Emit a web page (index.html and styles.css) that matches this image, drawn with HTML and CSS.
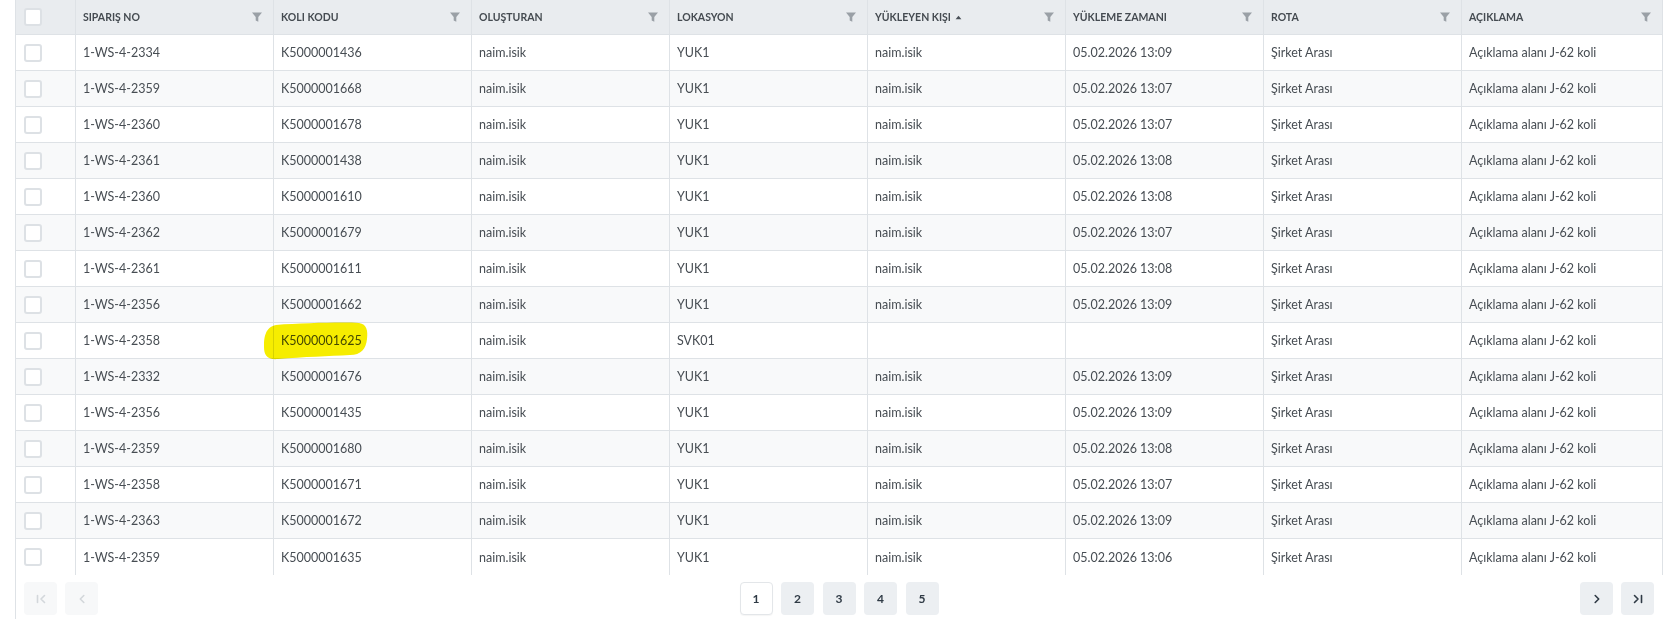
FILE: index.html
```html
<!DOCTYPE html>
<html lang="tr">
<head>
<meta charset="utf-8">
<title>Koli Listesi</title>
<link rel="stylesheet" href="styles.css">
</head>
<body>
<div class="panel">
  <div class="grid" id="grid">
    <div class="row head">
      <div class="cell chk"><span class="box"></span></div>
      <div class="cell"><span class="label">SIPARIŞ NO</span><svg class="filter" viewBox="0 0 12 12"><path d="M1 1.5H11L7.3 6V10.8L4.7 9.6V6Z"/></svg></div>
      <div class="cell"><span class="label">KOLI KODU</span><svg class="filter" viewBox="0 0 12 12"><path d="M1 1.5H11L7.3 6V10.8L4.7 9.6V6Z"/></svg></div>
      <div class="cell"><span class="label">OLUŞTURAN</span><svg class="filter" viewBox="0 0 12 12"><path d="M1 1.5H11L7.3 6V10.8L4.7 9.6V6Z"/></svg></div>
      <div class="cell"><span class="label">LOKASYON</span><svg class="filter" viewBox="0 0 12 12"><path d="M1 1.5H11L7.3 6V10.8L4.7 9.6V6Z"/></svg></div>
      <div class="cell"><span class="label">YÜKLEYEN KIŞI<svg class="sort" viewBox="0 0 8 6"><path d="M0.5 5L4 1L7.5 5Z"/></svg></span><svg class="filter" viewBox="0 0 12 12"><path d="M1 1.5H11L7.3 6V10.8L4.7 9.6V6Z"/></svg></div>
      <div class="cell"><span class="label">YÜKLEME ZAMANI</span><svg class="filter" viewBox="0 0 12 12"><path d="M1 1.5H11L7.3 6V10.8L4.7 9.6V6Z"/></svg></div>
      <div class="cell"><span class="label">ROTA</span><svg class="filter" viewBox="0 0 12 12"><path d="M1 1.5H11L7.3 6V10.8L4.7 9.6V6Z"/></svg></div>
      <div class="cell"><span class="label">AÇIKLAMA</span><svg class="filter" viewBox="0 0 12 12"><path d="M1 1.5H11L7.3 6V10.8L4.7 9.6V6Z"/></svg></div>
    </div>

    <div class="row"><div class="cell chk"><span class="box"></span></div><div class="cell">1-WS-4-2334</div><div class="cell">K5000001436</div><div class="cell">naim.isik</div><div class="cell">YUK1</div><div class="cell">naim.isik</div><div class="cell">05.02.2026 13:09</div><div class="cell">Şirket Arası</div><div class="cell">Açıklama alanı J-62 koli</div></div>
    <div class="row"><div class="cell chk"><span class="box"></span></div><div class="cell">1-WS-4-2359</div><div class="cell">K5000001668</div><div class="cell">naim.isik</div><div class="cell">YUK1</div><div class="cell">naim.isik</div><div class="cell">05.02.2026 13:07</div><div class="cell">Şirket Arası</div><div class="cell">Açıklama alanı J-62 koli</div></div>
    <div class="row"><div class="cell chk"><span class="box"></span></div><div class="cell">1-WS-4-2360</div><div class="cell">K5000001678</div><div class="cell">naim.isik</div><div class="cell">YUK1</div><div class="cell">naim.isik</div><div class="cell">05.02.2026 13:07</div><div class="cell">Şirket Arası</div><div class="cell">Açıklama alanı J-62 koli</div></div>
    <div class="row"><div class="cell chk"><span class="box"></span></div><div class="cell">1-WS-4-2361</div><div class="cell">K5000001438</div><div class="cell">naim.isik</div><div class="cell">YUK1</div><div class="cell">naim.isik</div><div class="cell">05.02.2026 13:08</div><div class="cell">Şirket Arası</div><div class="cell">Açıklama alanı J-62 koli</div></div>
    <div class="row"><div class="cell chk"><span class="box"></span></div><div class="cell">1-WS-4-2360</div><div class="cell">K5000001610</div><div class="cell">naim.isik</div><div class="cell">YUK1</div><div class="cell">naim.isik</div><div class="cell">05.02.2026 13:08</div><div class="cell">Şirket Arası</div><div class="cell">Açıklama alanı J-62 koli</div></div>
    <div class="row"><div class="cell chk"><span class="box"></span></div><div class="cell">1-WS-4-2362</div><div class="cell">K5000001679</div><div class="cell">naim.isik</div><div class="cell">YUK1</div><div class="cell">naim.isik</div><div class="cell">05.02.2026 13:07</div><div class="cell">Şirket Arası</div><div class="cell">Açıklama alanı J-62 koli</div></div>
    <div class="row"><div class="cell chk"><span class="box"></span></div><div class="cell">1-WS-4-2361</div><div class="cell">K5000001611</div><div class="cell">naim.isik</div><div class="cell">YUK1</div><div class="cell">naim.isik</div><div class="cell">05.02.2026 13:08</div><div class="cell">Şirket Arası</div><div class="cell">Açıklama alanı J-62 koli</div></div>
    <div class="row"><div class="cell chk"><span class="box"></span></div><div class="cell">1-WS-4-2356</div><div class="cell">K5000001662</div><div class="cell">naim.isik</div><div class="cell">YUK1</div><div class="cell">naim.isik</div><div class="cell">05.02.2026 13:09</div><div class="cell">Şirket Arası</div><div class="cell">Açıklama alanı J-62 koli</div></div>
    <div class="row"><div class="cell chk"><span class="box"></span></div><div class="cell">1-WS-4-2358</div><div class="cell marked"><span class="txt">K5000001625</span><svg class="marker" viewBox="-12 -2 108 40"><path d="M2 2C30 0 70 -1 85 0C93 1 94 8 93 16C92 26 87 32 76 32C55 33 30 34 4 36C-7 37 -10 32 -10 24C-10 15 -9 4 2 2Z"/></svg></div><div class="cell">naim.isik</div><div class="cell">SVK01</div><div class="cell"></div><div class="cell"></div><div class="cell">Şirket Arası</div><div class="cell">Açıklama alanı J-62 koli</div></div>
    <div class="row"><div class="cell chk"><span class="box"></span></div><div class="cell">1-WS-4-2332</div><div class="cell">K5000001676</div><div class="cell">naim.isik</div><div class="cell">YUK1</div><div class="cell">naim.isik</div><div class="cell">05.02.2026 13:09</div><div class="cell">Şirket Arası</div><div class="cell">Açıklama alanı J-62 koli</div></div>
    <div class="row"><div class="cell chk"><span class="box"></span></div><div class="cell">1-WS-4-2356</div><div class="cell">K5000001435</div><div class="cell">naim.isik</div><div class="cell">YUK1</div><div class="cell">naim.isik</div><div class="cell">05.02.2026 13:09</div><div class="cell">Şirket Arası</div><div class="cell">Açıklama alanı J-62 koli</div></div>
    <div class="row"><div class="cell chk"><span class="box"></span></div><div class="cell">1-WS-4-2359</div><div class="cell">K5000001680</div><div class="cell">naim.isik</div><div class="cell">YUK1</div><div class="cell">naim.isik</div><div class="cell">05.02.2026 13:08</div><div class="cell">Şirket Arası</div><div class="cell">Açıklama alanı J-62 koli</div></div>
    <div class="row"><div class="cell chk"><span class="box"></span></div><div class="cell">1-WS-4-2358</div><div class="cell">K5000001671</div><div class="cell">naim.isik</div><div class="cell">YUK1</div><div class="cell">naim.isik</div><div class="cell">05.02.2026 13:07</div><div class="cell">Şirket Arası</div><div class="cell">Açıklama alanı J-62 koli</div></div>
    <div class="row"><div class="cell chk"><span class="box"></span></div><div class="cell">1-WS-4-2363</div><div class="cell">K5000001672</div><div class="cell">naim.isik</div><div class="cell">YUK1</div><div class="cell">naim.isik</div><div class="cell">05.02.2026 13:09</div><div class="cell">Şirket Arası</div><div class="cell">Açıklama alanı J-62 koli</div></div>
    <div class="row last"><div class="cell chk"><span class="box"></span></div><div class="cell">1-WS-4-2359</div><div class="cell">K5000001635</div><div class="cell">naim.isik</div><div class="cell">YUK1</div><div class="cell">naim.isik</div><div class="cell">05.02.2026 13:06</div><div class="cell">Şirket Arası</div><div class="cell">Açıklama alanı J-62 koli</div></div>
  </div>

  <div class="pager">
    <div class="pgroup start">
      <button class="pbtn disabled" aria-label="İlk sayfa"><svg viewBox="0 0 14 14"><path d="M3.5 3.5V10.5M10.5 3.5L7 7L10.5 10.5"/></svg></button>
      <button class="pbtn disabled" aria-label="Önceki sayfa"><svg viewBox="0 0 14 14"><path d="M8.8 3.5L5.3 7L8.8 10.5"/></svg></button>
    </div>
    <div class="pgroup pages">
      <button class="pbtn num active">1</button>
      <button class="pbtn num">2</button>
      <button class="pbtn num">3</button>
      <button class="pbtn num">4</button>
      <button class="pbtn num">5</button>
    </div>
    <div class="pgroup end">
      <button class="pbtn" aria-label="Sonraki sayfa"><svg viewBox="0 0 14 14"><path d="M5.2 3.5L8.7 7L5.2 10.5"/></svg></button>
      <button class="pbtn" aria-label="Son sayfa"><svg viewBox="0 0 14 14"><path d="M3.5 3.5L7 7L3.5 10.5M10.5 3.5V10.5"/></svg></button>
    </div>
  </div>
</div>
</body>
</html>
```

FILE: styles.css
```css
* { box-sizing: border-box; }

html, body {
  margin: 0;
  padding: 0;
  background: #ffffff;
  overflow: hidden;
}

body {
  font-family: Lato, "Noto Sans", sans-serif;
  font-size: 12.5px;
  color: #474d53;
}

.panel {
  margin-left: 15px;
  border-left: 1px solid #dee2e6;
  min-height: 619px;
}

.grid {
  display: flex;
  flex-direction: column;
}

.row {
  display: grid;
  grid-template-columns: 60px repeat(7, 198px) 1fr;
  height: 36px;
  background: #ffffff;
}

.row:nth-child(odd) {
  background: #f8f9fa;
}

.row.head {
  height: 35px;
  background: #e9ecef;
}

.cell {
  display: flex;
  align-items: center;
  padding: 0 10px 0 7px;
  border-right: 1px solid #dee2e6;
  border-bottom: 1px solid #dee2e6;
  white-space: nowrap;
  overflow: visible;
  position: relative;
}

.row.last .cell {
  border-bottom: none;
}

.cell.chk {
  justify-content: flex-start;
  padding-left: 8px;
}

.head .cell {
  justify-content: space-between;
}

.label {
  font-size: 10.5px;
  font-weight: 700;
  color: #454b51;
  display: flex;
  align-items: center;
  gap: 4px;
}

.filter {
  width: 12px;
  height: 12px;
  fill: #9aa0a6;
  flex: none;
}

.sort {
  width: 7px;
  height: 5px;
  fill: #495057;
}

.box {
  display: block;
  width: 18px;
  height: 18px;
  border: 2px solid #dde1e5;
  border-radius: 3px;
  background: #ffffff;
}

.marked .txt {
  position: relative;
}

.marker {
  position: absolute;
  left: -12px;
  top: -2px;
  width: 108px;
  height: 40px;
  fill: #f6ed00;
  mix-blend-mode: multiply;
  pointer-events: none;
}

.pager {
  display: grid;
  grid-template-columns: 1fr auto 1fr;
  align-items: center;
  padding: 7px 9px 0 8px;
}

.pgroup {
  display: flex;
  gap: 8px;
}

.pgroup.pages {
  gap: 8.5px;
}

.pgroup.end {
  justify-content: flex-end;
}

.pbtn {
  width: 33px;
  height: 33px;
  border: 1px solid transparent;
  border-radius: 4px;
  background: #eceff2;
  padding: 0;
  display: flex;
  align-items: center;
  justify-content: center;
  font-family: Lato, "Noto Sans", sans-serif;
  font-size: 12px;
  font-weight: 700;
  color: #2f3a45;
}

.pbtn svg {
  width: 14px;
  height: 14px;
  fill: none;
  stroke: #2f3a45;
  stroke-width: 1.6;
  stroke-linecap: round;
  stroke-linejoin: round;
}

.pbtn.disabled {
  background: #f7f8f9;
}

.pbtn.disabled svg {
  stroke: #d3d7db;
}

.pbtn.active {
  background: #ffffff;
  border-color: #e3e6e9;
  box-shadow: 0 1px 1px rgba(0,0,0,0.04);
}
```
